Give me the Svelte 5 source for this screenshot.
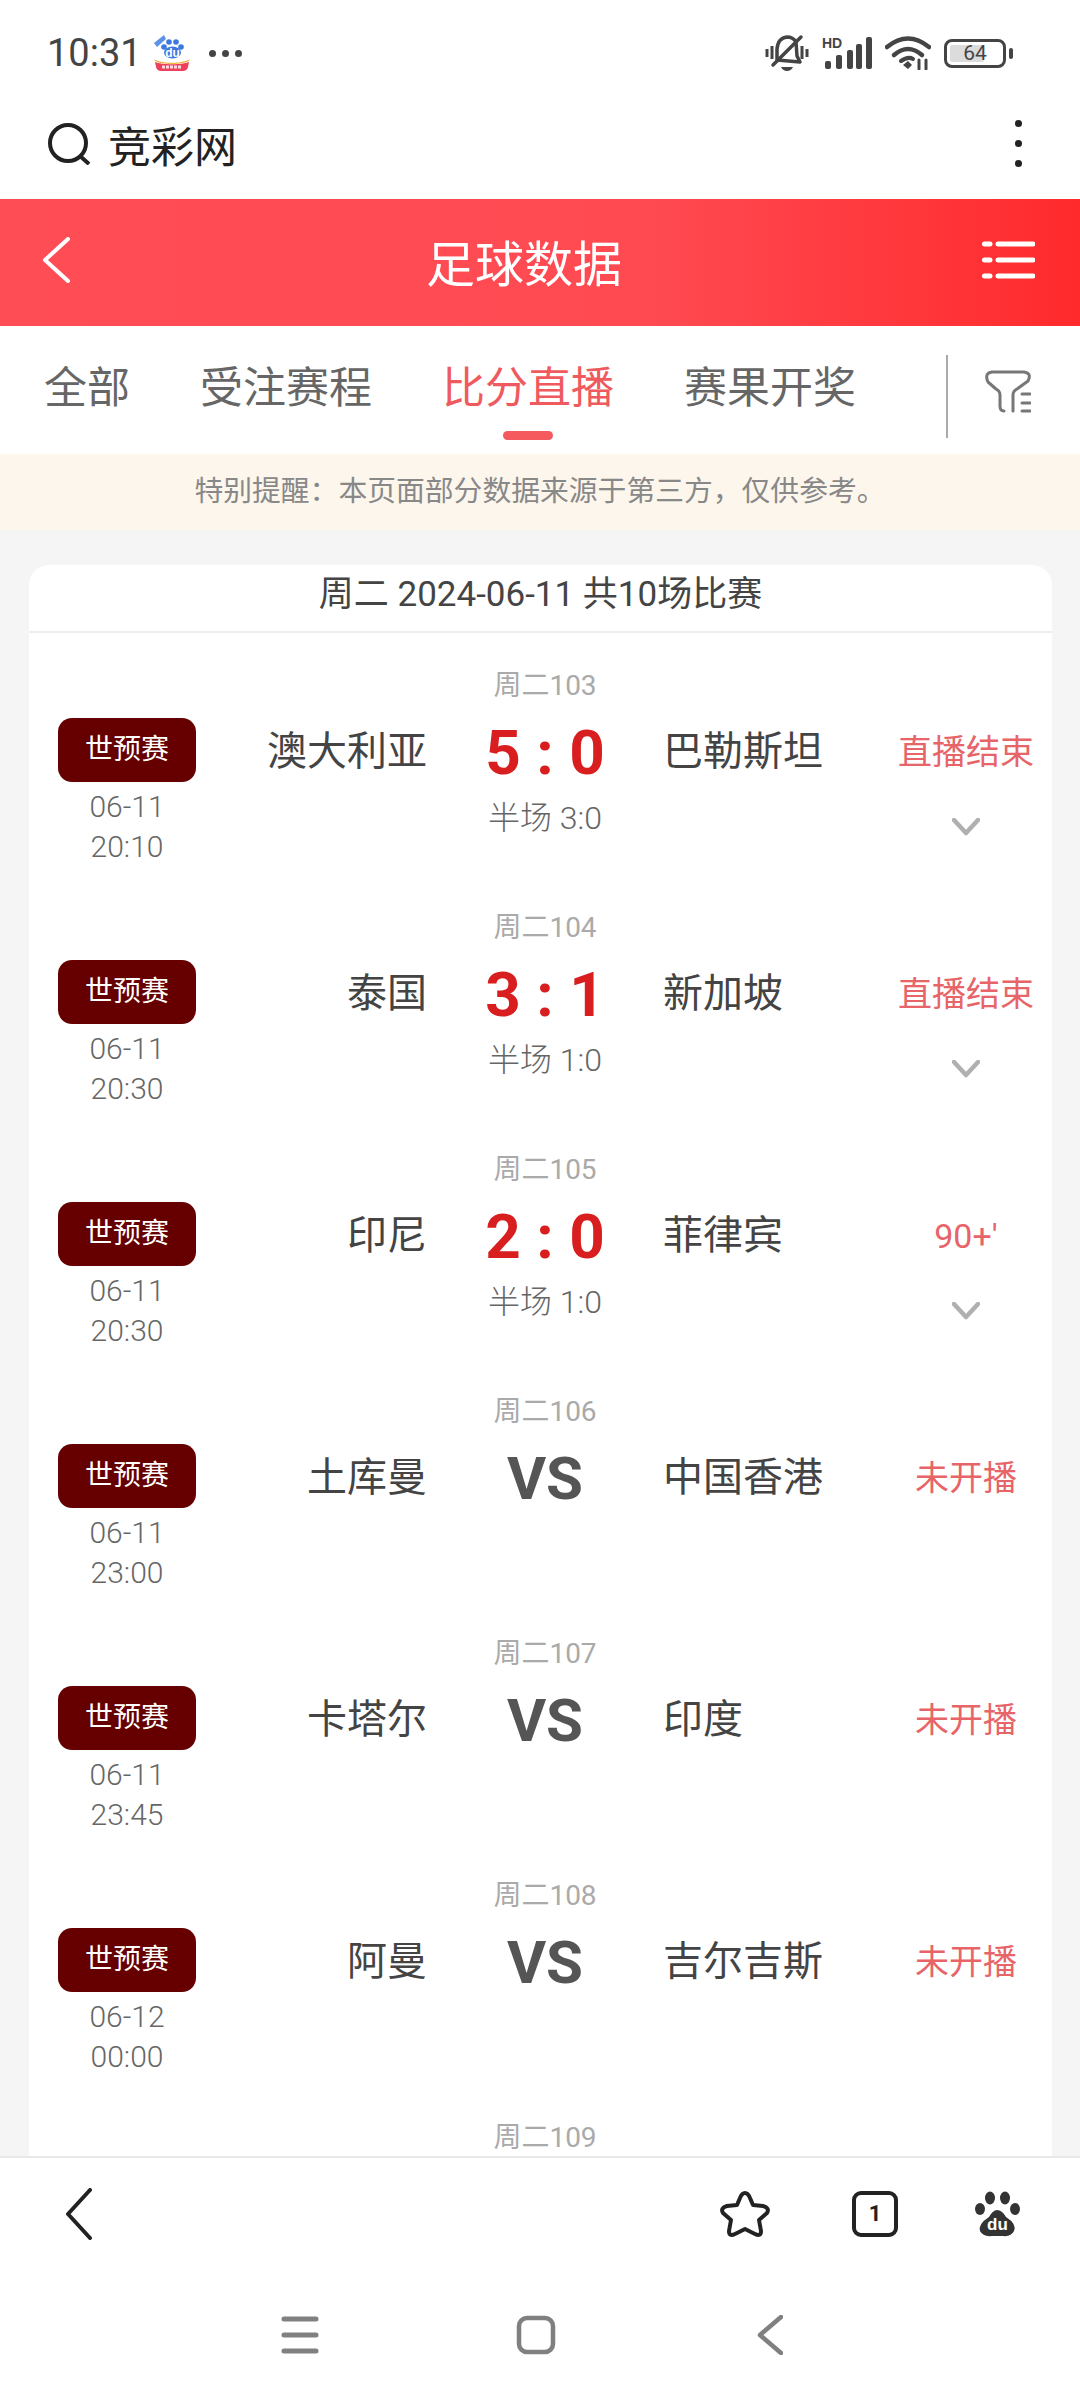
<script>
    const tabs = ["全部", "受注赛程", "比分直播", "赛果开奖"]

    const matches = [
        { num: "周二103", date: "06-11", time: "20:10", home: "澳大利亚", away: "巴勒斯坦", score: "5 : 0", half: "半场 3:0", status: "直播结束" },
        { num: "周二104", date: "06-11", time: "20:30", home: "泰国", away: "新加坡", score: "3 : 1", half: "半场 1:0", status: "直播结束" },
        { num: "周二105", date: "06-11", time: "20:30", home: "印尼", away: "菲律宾", score: "2 : 0", half: "半场 1:0", status: "90+'" },
        { num: "周二106", date: "06-11", time: "23:00", home: "土库曼", away: "中国香港", status: "未开播" },
        { num: "周二107", date: "06-11", time: "23:45", home: "卡塔尔", away: "印度", status: "未开播" },
        { num: "周二108", date: "06-12", time: "00:00", home: "阿曼", away: "吉尔吉斯", status: "未开播" },
        { num: "周二109" }
    ]
</script>

<div class="page">
    <div class="statusBar">
        <div class="statusLeft">
            <span class="clock">10:31</span>
            <svg class="appIcon" viewBox="0 0 38 38" width="38" height="38">
                <path d="M1 9 L11 1 L13 5 L4 13 Z" fill="#5b93e8"/>
                <circle cx="16" cy="8" r="2.800" fill="#3d78e0"/>
                <circle cx="23" cy="8" r="2.800" fill="#3d78e0"/>
                <circle cx="11" cy="13" r="2.800" fill="#3d78e0"/>
                <circle cx="28" cy="13" r="2.800" fill="#3d78e0"/>
                <ellipse cx="19.500" cy="18.500" rx="8.500" ry="6" fill="#3d78e0"/>
                <text x="19.500" y="22.500" text-anchor="middle" class="appDu">du</text>
                <path d="M1 25 C8 30 30 30 37 25 L36 27 C30 31 8 31 2 27 Z" fill="#f2b441"/>
                <path d="M2 28 C8 31 30 31 36 28 L35 33 Q34 37 30 37 L8 37 Q4 37 3 33 Z" fill="#ee3f5d"/>
                <path d="M9 33 H29" stroke="#ffd9df" stroke-width="3" stroke-dasharray="3 1"/>
            </svg>
            <span class="moreDots"><i></i><i></i><i></i></span>
        </div>
        <div class="statusRight">
            <svg viewBox="0 0 44 38" width="44" height="38" fill="none" stroke="#444">
                <path d="M2 15v8M7 12v13M37 12v13M42 15v8" stroke-width="3"/>
                <path d="M12 26 V15 Q13 4 22 3 Q28 3 31 8 L32 22 L35 28 Z" stroke-width="3.500" stroke-linejoin="round"/>
                <path d="M8 31 L36 3" stroke-width="3.500" stroke-linecap="round"/>
                <path d="M16 33 H28 Q26 37 22 37 Q18 37 16 33 Z" fill="#444" stroke="none"/>
            </svg>
            <svg viewBox="0 0 50 32" width="50" height="32" fill="#444">
                <text x="0" y="11" class="hd">HD</text>
                <rect x="3" y="24" width="6" height="8" rx="2"/>
                <rect x="14" y="18" width="6" height="14" rx="2"/>
                <rect x="25" y="13" width="6" height="19" rx="2"/>
                <rect x="34" y="7" width="6" height="25" rx="2"/>
                <rect x="44" y="0" width="6" height="32" rx="2"/>
            </svg>
            <svg viewBox="0 0 46 34" width="46" height="34" fill="none" stroke="#444" stroke-width="4.500" stroke-linecap="round">
                <path d="M2 11 Q23 -6 44 11"/>
                <path d="M9 19 Q23 7 37 19"/>
                <path d="M16 25 Q23 20 28 23" stroke-width="4"/>
                <path d="M18 29 L23 25 L27 29 L23 33 Z" fill="#444" stroke="none"/>
                <path d="M34 24v9M41 24v9" stroke-width="3"/>
            </svg>
            <div class="battery">
                <div class="batteryBody"><span class="batteryFill"></span><span class="batteryText">64</span></div>
                <span class="batteryNub"></span>
            </div>
        </div>
    </div>

    <div class="addressBar">
        <div class="search">
            <svg viewBox="0 0 42 42" width="42" height="42" fill="none" stroke="#222" stroke-width="4">
                <circle cx="20" cy="20" r="18"/>
                <path d="M32 33 L41 41"/>
            </svg>
            <span>竞彩网</span>
        </div>
        <div class="kebab"><i></i><i></i><i></i></div>
    </div>

    <header class="titleBar">
        <svg viewBox="0 0 28 46" width="28" height="46" fill="none" stroke="#fff" stroke-width="4" stroke-linecap="round" stroke-linejoin="round">
            <path d="M26 2 L3 23 L26 44"/>
        </svg>
        <h1>足球数据</h1>
        <svg viewBox="0 0 53 38" width="53" height="38" stroke="#fff" stroke-width="5" stroke-linecap="round">
            <path d="M2.500 3H8M16 3H51M2.500 19H8M16 19H51M2.500 35H8M16 35H51"/>
        </svg>
    </header>

    <nav class="tabBar">
        <div class="tabs">
            {#each tabs as tab, i}
                <div class="tab {i === 2 ? "active" : ""}">{tab}</div>
            {/each}
        </div>
        <div class="filter">
            <svg viewBox="0 0 46 44" width="46" height="44" fill="none" stroke="#777" stroke-width="3" stroke-linecap="round" stroke-linejoin="round">
                <path d="M19 41 Q15 41 15 36 V25 Q15 21 11 19 L3 12 Q-1 3 7 2 H39 Q47 3 43 11 L32 19 Q28 21 28 25 V41"/>
                <path d="M37 24H45M37 33H45M37 41H45"/>
            </svg>
        </div>
    </nav>

    <div class="notice">特别提醒：本页面部分数据来源于第三方，仅供参考。</div>

    <main class="content">
        <section class="card">
            <div class="cardHead">周二 2024-06-11 共10场比赛</div>
            {#each matches as match}
                <div class="row {match.home ? "" : "cut"}">
                    <div class="num">{match.num}</div>
                    {#if match.home}
                        <div class="league">世预赛</div>
                        <div class="when">{match.date}<br />{match.time}</div>
                        <div class="home">{match.home}</div>
                        {#if match.score}
                            <div class="score">{match.score}</div>
                            <div class="half">{match.half}</div>
                        {:else}
                            <div class="score vs">VS</div>
                        {/if}
                        <div class="away">{match.away}</div>
                        <div class="status">{match.status}</div>
                        {#if match.score}
                            <svg class="chevron" viewBox="0 0 28 18" width="28" height="18" fill="none" stroke="#b0b0b0" stroke-width="4.500" stroke-linecap="round" stroke-linejoin="round">
                                <path d="M2 2 L14 15 L26 2"/>
                            </svg>
                        {/if}
                    {/if}
                </div>
            {/each}
        </section>
    </main>

    <div class="toolBar">
        <svg viewBox="0 0 26 52" width="26" height="52" fill="none" stroke="#222" stroke-width="4" stroke-linecap="round" stroke-linejoin="round">
            <path d="M24 2 L2 26 L24 50"/>
        </svg>
        <div class="toolRight">
            <svg viewBox="0 0 50 48" width="50" height="48" fill="none" stroke="#222" stroke-width="4" stroke-linejoin="round">
                <path d="M25 3 Q28 3 30 8 L33 15 L43 16 Q50 18 47 23 L39 30 L41 41 Q41 47 35 44 L25 39 L15 44 Q9 47 9 41 L11 30 L3 23 Q0 18 7 16 L17 15 L20 8 Q22 3 25 3 Z"/>
            </svg>
            <div class="tabCount">1</div>
            <svg class="paw" viewBox="0 0 46 46" width="46" height="46" fill="#333">
                <ellipse cx="15" cy="7" rx="5" ry="6.500"/>
                <ellipse cx="30" cy="7" rx="5" ry="6.500"/>
                <ellipse cx="5" cy="18" rx="5" ry="6"/>
                <ellipse cx="40" cy="18" rx="5" ry="6"/>
                <path d="M22 19 Q27 19 31 26 Q42 33 39 40 Q36 46 28 45 H17 Q8 46 5 40 Q3 33 14 26 Q18 19 22 19 Z"/>
                <text x="22.500" y="39" text-anchor="middle" class="pawDu">du</text>
            </svg>
        </div>
    </div>

    <div class="navBar">
        <svg viewBox="0 0 38 38" width="38" height="38" stroke="#808080" stroke-width="5" stroke-linecap="round">
            <path d="M3 3H35M3 19H35M3 35H35"/>
        </svg>
        <svg viewBox="0 0 40 40" width="40" height="40" fill="none" stroke="#808080" stroke-width="4.500">
            <rect x="3" y="3" width="34" height="34" rx="8"/>
        </svg>
        <svg class="navBack" viewBox="0 0 26 40" width="26" height="40" fill="none" stroke="#808080" stroke-width="4.500" stroke-linecap="round" stroke-linejoin="round">
            <path d="M24 2 L3 20 L24 38"/>
        </svg>
    </div>
</div>

<style>
    :global(body) {
        margin: 0;
        background: #fff;
    }

    .page {
        width: 1080px;
        height: 2400px;
        display: flex;
        flex-direction: column;
        overflow: hidden;
        font-family: Roboto, "Noto Sans CJK SC", sans-serif;
        color: #333;
    }

    .statusBar {
        height: 106px;
        flex: none;
        display: flex;
        align-items: center;
        justify-content: space-between;
        padding: 0 67px 0 47px;
    }

    .statusLeft, .statusRight {
        display: flex;
        align-items: center;
    }

    .statusRight {
        gap: 13px;
    }

    .clock {
        font-size: 38px;
        color: #444;
        width: 106px;
    }

    .appDu {
        font: 700 12px "Liberation Sans", sans-serif;
        fill: #fff;
    }

    .moreDots {
        display: flex;
        gap: 6px;
        margin-left: 18px;
    }

    .moreDots i {
        width: 7px;
        height: 7px;
        border-radius: 50%;
        background: #444;
    }

    .hd {
        font: 700 14px "Liberation Sans", sans-serif;
    }

    .battery {
        display: flex;
        align-items: center;
        gap: 3px;
    }

    .batteryBody {
        position: relative;
        width: 62px;
        height: 29px;
        box-sizing: border-box;
        border: 3px solid #444;
        border-radius: 8px;
    }

    .batteryFill {
        position: absolute;
        left: 3px;
        top: 3px;
        bottom: 3px;
        width: 34px;
        background: #dcdcdc;
        border-radius: 2px;
    }

    .batteryText {
        position: relative;
        display: block;
        text-align: center;
        font-size: 21px;
        line-height: 23px;
        color: #444;
    }

    .batteryNub {
        width: 4px;
        height: 11px;
        background: #444;
        border-radius: 2px;
    }

    .addressBar {
        height: 93px;
        flex: none;
        display: flex;
        align-items: center;
        justify-content: space-between;
        padding: 0 58px 18px 48px;
        box-sizing: border-box;
    }

    .search {
        display: flex;
        align-items: center;
        gap: 18px;
        font-size: 43px;
        color: #222;
    }

    .kebab {
        display: flex;
        flex-direction: column;
        gap: 13px;
    }

    .kebab i {
        width: 7px;
        height: 7px;
        border-radius: 50%;
        background: #222;
    }

    .titleBar {
        height: 127px;
        flex: none;
        box-sizing: border-box;
        display: flex;
        align-items: center;
        justify-content: space-between;
        padding: 0 45px 5px 42px;
        background: linear-gradient(90deg, #ff4d55 0%, #ff4a52 60%, #ff2a2c 100%);
    }

    h1 {
        margin: 0 0 0 -4px;
        font-size: 49px;
        font-weight: 400;
        color: #fff;
    }

    .tabBar {
        height: 128px;
        flex: none;
        display: flex;
        padding-left: 44px;
    }

    .tabs {
        display: flex;
        gap: 70px;
        width: 902px;
    }

    .tab {
        position: relative;
        font-size: 43px;
        line-height: 124px;
        height: 128px;
        color: #666;
    }

    .active {
        color: #ef5a5e;
    }

    .active::after {
        content: "";
        position: absolute;
        left: 50%;
        bottom: 14px;
        width: 50px;
        height: 9px;
        margin-left: -25px;
        border-radius: 5px;
        background: #f55a5f;
    }

    .filter {
        align-self: flex-start;
        margin-top: 29px;
        height: 68px;
        border-left: 2px solid #aaa;
        padding: 15px 0 0 37px;
    }

    .notice {
        height: 76px;
        flex: none;
        background: #fdf6ec;
        font-size: 28.800px;
        line-height: 74px;
        text-align: center;
        color: #888;
    }

    .content {
        flex: 1;
        min-height: 0;
        display: flex;
        flex-direction: column;
        background: #f5f5f5;
        padding: 35px 28px 0 29px;
    }

    .card {
        flex: 1;
        background: #fff;
        border-radius: 20px 20px 0 0;
    }

    .cardHead {
        height: 68px;
        box-sizing: border-box;
        border-bottom: 2px solid #eee;
        font-size: 35px;
        line-height: 60px;
        text-align: center;
        color: #444;
    }

    .row {
        display: grid;
        grid-template-columns: 138px 231px 236px 233px 140px;
        grid-template-rows: 85px 64px 1fr;
        height: 242px;
        padding-left: 29px;
    }

    .cut {
        height: auto;
        grid-template-rows: auto;
    }

    .num {
        grid-column: 3;
        grid-row: 1;
        padding-top: 36px;
        font-size: 28px;
        line-height: 34px;
        text-align: center;
        color: #aaa;
    }

    .league {
        grid-column: 1;
        grid-row: 2;
        background: #660000;
        border-radius: 14px;
        font-size: 28px;
        line-height: 64px;
        text-align: center;
        color: #fff;
    }

    .when {
        grid-column: 1;
        grid-row: 3;
        padding-top: 5px;
        font-size: 30px;
        font-weight: 300;
        line-height: 40px;
        text-align: center;
        color: #666;
    }

    .home, .away {
        grid-row: 2;
        font-size: 40px;
        line-height: 68px;
        color: #444;
    }

    .home {
        grid-column: 2;
        text-align: right;
    }

    .away {
        grid-column: 4;
    }

    .score {
        grid-column: 3;
        grid-row: 2;
        font-size: 62px;
        font-weight: 700;
        line-height: 70px;
        text-align: center;
        color: #d81e1e;
    }

    .vs {
        font-size: 60px;
        color: #555;
    }

    .half {
        grid-column: 3;
        grid-row: 3;
        margin-top: 16px;
        font-size: 32px;
        font-weight: 300;
        line-height: 40px;
        text-align: center;
        color: #666;
    }

    .status {
        grid-column: 5;
        grid-row: 2;
        font-size: 34px;
        line-height: 68px;
        text-align: center;
        color: #e76468;
    }

    .chevron {
        grid-column: 5;
        grid-row: 3;
        justify-self: center;
        margin-top: 36px;
    }

    .toolBar {
        height: 126px;
        flex: none;
        box-sizing: border-box;
        border-top: 2px solid #e8e8e8;
        background: #fff;
        display: flex;
        align-items: center;
        justify-content: space-between;
        padding: 0 59px 12px 66px;
    }

    .toolRight {
        display: flex;
        align-items: center;
        gap: 82px;
    }

    .tabCount {
        width: 46px;
        height: 46px;
        box-sizing: border-box;
        border: 4px solid #222;
        border-radius: 9px;
        font-size: 22px;
        font-weight: 700;
        line-height: 38px;
        text-align: center;
        color: #222;
    }

    .paw {
        margin-left: -5px;
    }

    .pawDu {
        font: 700 17px "Liberation Sans", sans-serif;
        fill: #fff;
    }

    .navBar {
        height: 118px;
        flex: none;
        background: #fff;
        display: flex;
        align-items: center;
        padding: 0 0 13px 281px;
        box-sizing: border-box;
        gap: 197px;
    }

    .navBack {
        margin-left: 4px;
    }
</style>
